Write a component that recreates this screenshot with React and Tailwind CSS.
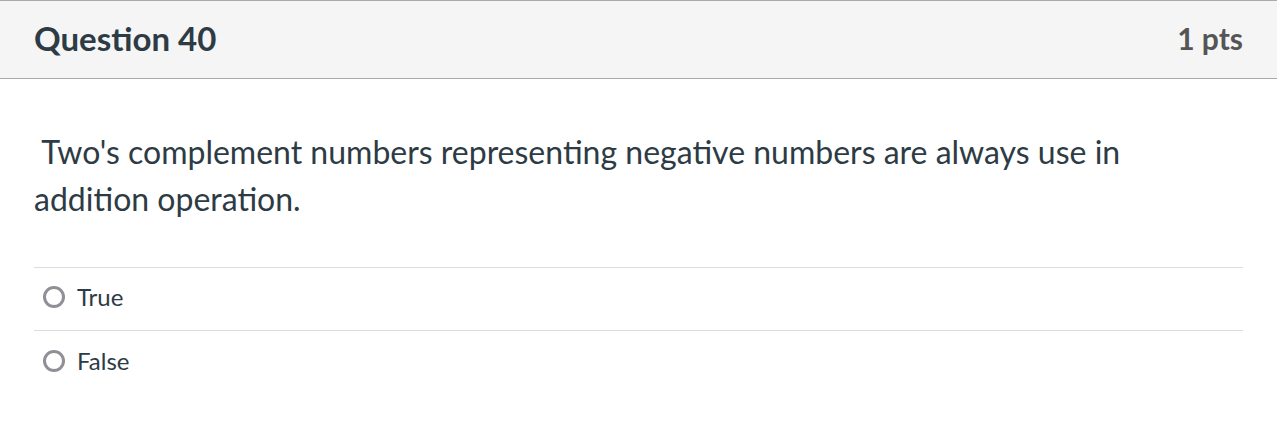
export default function App() {
  const answers = ['True', 'False'];

  return (
    <div className="w-[1277px] h-[425px] bg-white text-[#2d3b45]" style={{ fontFamily: 'Lato, "Noto Sans", sans-serif' }}>
      <div className="border-t border-b border-[#aaaaaa] bg-[#f5f5f5] h-[79px] flex items-center justify-between px-[34px]">
        <h2 className="text-[33px] font-bold leading-none -mt-[3px]">Question 40</h2>
        <span className="text-[30px] font-bold text-[#555555] leading-none -mt-[3px]">1 pts</span>
      </div>

      <div className="px-[34px] pt-[49px]">
        <p className="text-[32px] leading-[47px]">
          &nbsp;Two's complement numbers representing negative numbers are always use in addition operation.
        </p>

        <div className="mt-[45px] border-t border-[#dddddd]">
          {answers.map((a) => (
            <label key={a} className="flex items-center h-[63px] pb-[4px] border-b border-[#dddddd] last:border-b-0 pl-[9px]">
              <span className="w-[22px] h-[22px] rounded-full border-[3px] border-[#8f8f97] bg-white" />
              <span className="ml-[12px] text-[24px]">{a}</span>
            </label>
          ))}
        </div>
      </div>
    </div>
  );
}
